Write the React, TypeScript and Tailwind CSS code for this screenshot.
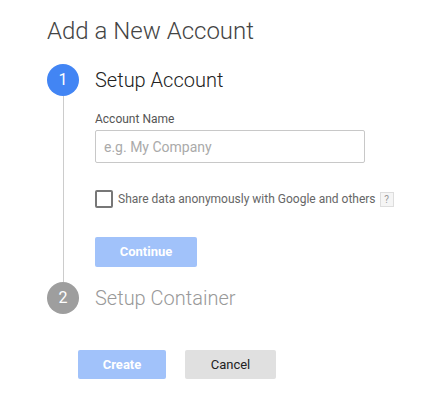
import React, { useState } from 'react';

const font = { fontFamily: 'Roboto, "Liberation Sans", sans-serif' };

const App: React.FC = () => {
  const [name, setName] = useState('');
  const [share, setShare] = useState(false);

  return (
    <div className="w-[442px] h-[398px] bg-white" style={font}>
      <div className="pl-[47px] pt-[16px]">
        <h1 className="text-[24px] leading-[30px] font-light text-[#444]">Add a New Account</h1>

        {/* Step 1 */}
        <div className="flex mt-[18px]">
          <div className="flex flex-col items-center w-[32px]">
            <div className="w-[32px] h-[32px] rounded-full bg-[#4285f4] text-white text-[16px] flex items-center justify-center">
              1
            </div>
            <div className="w-px flex-1 bg-[#ccc]" />
          </div>
          <div className="ml-[16px] flex-1">
            <h2 className="text-[20px] leading-[32px] font-light text-[#222]">Setup Account</h2>
            <div className="pt-[16px] pb-[15px]">
              <label className="block text-[12px] leading-[14px] text-[#555]">Account Name</label>
              <input
                value={name}
                onChange={(e) => setName(e.target.value)}
                placeholder="e.g. My Company"
                className="mt-[4px] w-[270px] h-[33px] border border-[#c8c8c8] rounded-[2px] px-[8px] text-[14px] text-[#333] placeholder:text-[#aaa] outline-none"
              />
              <label className="flex items-center mt-[27px] cursor-pointer">
                <span
                  onClick={() => setShare(!share)}
                  className="w-[18px] h-[18px] border-2 border-[#777] rounded-[2px] flex items-center justify-center"
                >
                  {share && <span className="text-[12px] text-[#4285f4]">✓</span>}
                </span>
                <span className="ml-[5px] text-[12px] text-[#666]">Share data anonymously with Google and others</span>
                <span className="ml-[4px] w-[14px] h-[15px] border border-[#ddd] bg-[#f5f5f5] text-[#999] text-[10px] flex items-center justify-center">?</span>
              </label>
              <button className="block mt-[29px] w-[102px] h-[30px] rounded-[2px] bg-[#a1c2fa] text-white text-[13px] font-bold">
                Continue
              </button>
            </div>
          </div>
        </div>

        {/* Step 2 */}
        <div className="flex">
          <div className="w-[32px] h-[32px] rounded-full bg-[#9e9e9e] text-white text-[16px] flex items-center justify-center">
            2
          </div>
          <h2 className="ml-[16px] text-[20px] leading-[32px] font-light text-[#999]">Setup Container</h2>
        </div>

        <div className="flex gap-[19px] mt-[36px] ml-[31px]">
          <button className="w-[88px] h-[29px] rounded-[2px] bg-[#a1c2fa] text-white text-[13px] font-bold">Create</button>
          <button className="w-[91px] h-[29px] rounded-[2px] bg-[#e0e0e0] text-[#222] text-[13px]">Cancel</button>
        </div>
      </div>
    </div>
  );
};

export default App;
